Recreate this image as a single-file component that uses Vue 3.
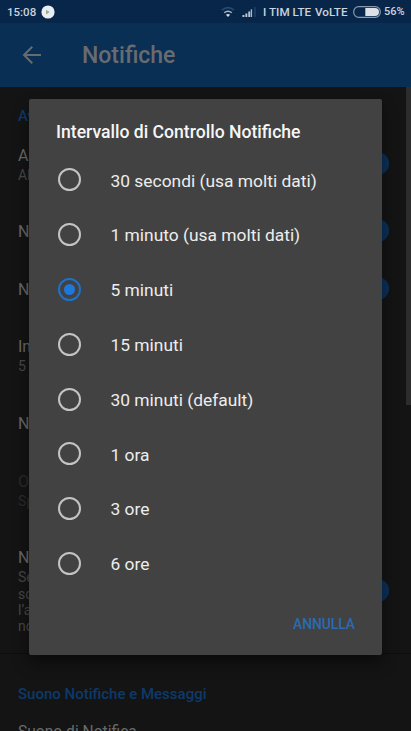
<script setup>
import { ref } from "vue";

const options = [
  "30 secondi (usa molti dati)",
  "1 minuto (usa molti dati)",
  "5 minuti",
  "15 minuti",
  "30 minuti (default)",
  "1 ora",
  "3 ore",
  "6 ore",
];
const selected = ref(2);
const open = ref(true);

const settings = [
  { title: "Abilita", lines: ["Abilita"], toggle: true, size: "tall" },
  { title: "Notifiche", lines: [], toggle: true, size: "single" },
  { title: "Notifiche", lines: [], toggle: true, size: "single" },
  { title: "Intervallo", lines: ["5 minuti"], size: "double" },
  { title: "Notifiche", lines: [], size: "single" },
  { title: "Orario", lines: ["Spento"], size: "double", disabled: true },
  { title: "Notifiche", lines: ["Se", "so", "l’a", "no"], toggle: true, size: "multi" },
];
</script>

<template>
  <div class="screen">
    <div class="status">
      <span class="time">15:08</span>
      <svg class="play" width="14" height="14" viewBox="0 0 14 14">
        <circle cx="7" cy="7" r="6.6" fill="#e9eef2" />
        <path d="M5 4.8v4.4l3.8-2.2z" fill="#8db09a" />
        <path d="M5 7v2.2l2-1.1z" fill="#c69b72" />
      </svg>
      <svg class="wifi" width="14" height="12" viewBox="0 0 14 12">
        <path d="M1 4.2Q7-.8 13 4.2" fill="none" stroke="#2c4a6b" stroke-width="1.7" />
        <path d="M3.2 6.8Q7 3.6 10.8 6.8" fill="none" stroke="#a9b6c4" stroke-width="1.5" />
        <path d="M4.9 8.7Q7 7.2 9.1 8.7L7 11z" fill="#d3dae2" />
      </svg>
      <svg class="signal" width="15" height="10" viewBox="0 0 15 10">
        <path d="M.5 8h1.9v2H.5zM3.4 6.6h1.9V10H3.4zM6.3 4.6h1.9V10H6.3z" fill="#c0cad5" />
        <path d="M8.7 2.3h1.4V10H8.7z" fill="#aab8c6" />
        <path d="M12 0h1.9v10H12z" fill="#1c3a5d" />
      </svg>
      <span class="carrier">I TIM LTE</span>
      <span class="volte">VoLTE</span>
      <svg class="battery" width="28" height="12" viewBox="0 0 28 12">
        <rect x=".7" y=".7" width="26.6" height="10.6" rx="5" fill="none" stroke="#8999ab" stroke-width="1.2" />
        <path d="M12.3 2H22q4 0 4 4t-4 4h-9.7z" fill="#dbe1e7" />
      </svg>
      <span class="percent">56%</span>
    </div>

    <header class="appbar">
      <svg class="back" width="20" height="20" viewBox="0 0 20 20">
        <path d="M19 10H2M10.3 1.7L2 10l8.3 8.3" fill="none" stroke="#666b70" stroke-width="2" />
      </svg>
      <h1>Notifiche</h1>
    </header>

    <main class="list">
      <h2 class="first">Avvisi</h2>
      <section
        v-for="(item, i) in settings"
        :key="i"
        class="row"
        :class="[item.size, { disabled: item.disabled }]"
      >
        <div>
          <div class="name">{{ item.title }}</div>
          <div v-for="line in item.lines" :key="line" class="sub">{{ line }}</div>
        </div>
        <span v-if="item.toggle" class="knob"></span>
      </section>
      <h2 class="second">Suono Notifiche e Messaggi</h2>
      <div class="name last">Suono di Notifica</div>
    </main>
    <div class="scrollbar"></div>

    <div v-if="open" class="dialog">
      <h3>Intervallo di Controllo Notifiche</h3>
      <ul>
        <li v-for="(label, i) in options" :key="label" @click="selected = i">
          <span class="radio" :class="{ checked: selected === i }"></span>
          <span class="label">{{ label }}</span>
        </li>
      </ul>
      <div class="actions">
        <button @click="open = false">ANNULLA</button>
      </div>
    </div>
  </div>
</template>

<style>
body {
  background: #141414;
}
</style>

<style scoped>
.screen {
  position: relative;
  width: 411px;
  height: 731px;
  overflow: hidden;
  background: #141414;
  font-family: Roboto, "Liberation Sans", sans-serif;
}
h1, h2, h3, ul {
  margin: 0;
  padding: 0;
}
.status {
  display: flex;
  align-items: center;
  box-sizing: border-box;
  height: 23px;
  padding-left: 7px;
  background: #07264a;
  color: #cbd3dc;
  font-size: 11.7px;
  font-weight: 500;
  white-space: nowrap;
}
.time {
  width: 34px;
  font-size: 11.5px;
}
.wifi {
  margin-left: 166px;
}
.signal {
  margin-left: 7px;
}
.carrier {
  width: 52px;
  margin-left: 6px;
}
.volte {
  width: 38px;
}
.percent {
  margin-left: 3px;
  font-size: 11px;
}
.appbar {
  display: flex;
  align-items: center;
  height: 64px;
  padding-left: 22px;
  background: #092f55;
}
.appbar h1 {
  margin-left: 40px;
  color: #686c70;
  font-size: 23px;
  font-weight: 500;
}
.list {
  padding-left: 18px;
}
h2 {
  color: #0d3a6a;
  font-size: 15px;
  font-weight: 500;
  line-height: 20px;
}
.first {
  padding: 19px 0 20px;
}
.second {
  margin-left: -18px;
  padding: 30px 0 18px 18px;
  border-top: 1px solid #0d0d0d;
}
.row {
  display: flex;
  justify-content: space-between;
  box-sizing: border-box;
  padding-right: 22px;
  white-space: nowrap;
}
.tall {
  height: 76px;
}
.single {
  height: 57.7px;
}
.double {
  height: 76.6px;
}
.multi {
  height: 105px;
}
.name {
  color: #696969;
  font-size: 16px;
  line-height: 20px;
}
.last {
  font-size: 15.6px;
}
.sub {
  color: #484848;
  font-size: 14px;
  line-height: 16.3px;
}
.name + .sub {
  margin-top: 1px;
}
.disabled .name,
.disabled .sub {
  color: #2b2b2b;
}
.knob {
  width: 23px;
  height: 23px;
  border-radius: 50%;
  background: #0b3158;
}
.tall .knob {
  margin-top: 6px;
}
.single .knob {
  margin-top: -3px;
}
.multi .knob {
  margin-top: 31px;
}
.scrollbar {
  position: absolute;
  top: 87px;
  right: 0;
  width: 5px;
  height: 318px;
  background: #2d2d2d;
}
.dialog {
  position: absolute;
  top: 99px;
  left: 28.5px;
  box-sizing: border-box;
  width: 353.5px;
  height: 556px;
  padding-top: 22px;
  border-radius: 2px;
  background: #424242;
  box-shadow: 0 8px 16px rgba(0, 0, 0, 0.45);
}
.dialog h3 {
  padding-left: 27.5px;
  color: #f6f6f6;
  font-size: 17.6px;
  font-weight: 500;
  line-height: 22px;
}
li {
  display: flex;
  align-items: center;
  height: 54.8px;
  padding-left: 29px;
  color: #ededed;
  font-size: 17.4px;
  list-style: none;
  cursor: pointer;
}
ul {
  margin-top: 9.5px;
}
.label {
  padding-top: 1.6px;
}
.radio {
  display: flex;
  align-items: center;
  justify-content: center;
  box-sizing: border-box;
  width: 23px;
  height: 23px;
  margin-right: 30px;
  border: 2px solid #c4c4c4;
  border-radius: 50%;
}
.checked {
  border-color: #1f70c9;
}
.checked::after {
  width: 11px;
  height: 11px;
  border-radius: 50%;
  background: #1d78de;
  content: "";
}
.actions {
  display: flex;
  justify-content: flex-end;
  padding: 23px 27px 0 0;
}
button {
  padding: 0;
  border: 0;
  background: none;
  color: #2a6bb5;
  font-family: inherit;
  font-size: 13.8px;
  font-weight: 500;
  line-height: 20px;
}
</style>
